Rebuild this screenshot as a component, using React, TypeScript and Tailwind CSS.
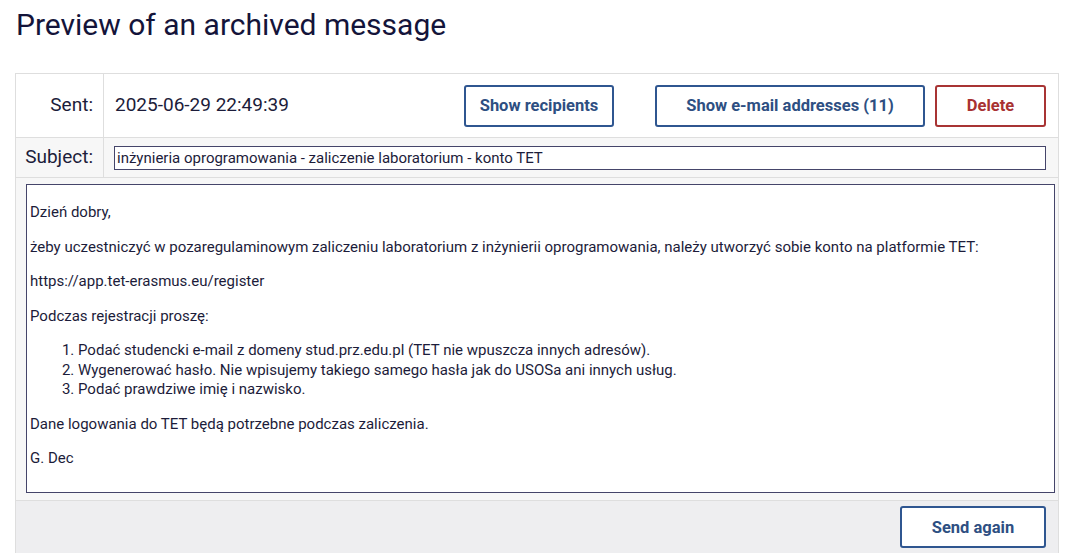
import React from 'react';

const BTN = 'h-[42px] rounded-[3px] border-2 bg-white pt-[2px] text-[16.5px] font-bold';
const BLUE = 'border-[#2f5690] text-[#2e4f82]';

export default function App() {
  return (
    <div className="min-h-screen bg-white font-['Roboto',sans-serif] text-[#1c1c3a]">
      <h1 className="pl-4 pt-[7px] text-[30px] leading-[36px] text-[#14143a]">Preview of an archived message</h1>

      <div className="ml-[15px] mr-[6px] mt-[30px] border-x border-t border-[#dedede]">
        {/* sent row */}
        <div className="flex h-[64px] border-b border-[#dedede]">
          <div className="flex w-[88px] items-center justify-end border-r border-[#dedede] pr-[10px] text-[19px]">Sent:</div>
          <div className="flex flex-1 items-center pl-[11px] text-[19px]">
            <span className="flex-1">2025-06-29 22:49:39</span>
            <button className={`${BTN} ${BLUE} w-[150px]`}>Show recipients</button>
            <button className={`${BTN} ${BLUE} ml-[41px] w-[270px]`}>Show e-mail addresses (11)</button>
            <button className={`${BTN} ml-[10px] mr-[12px] w-[111px] border-[#a83434] text-[#a83232]`}>Delete</button>
          </div>
        </div>

        {/* subject row */}
        <div className="flex h-[40px] border-b border-[#dedede] bg-[#f7f7f7]">
          <div className="flex w-[88px] items-center justify-end border-r border-[#dedede] pr-[10px] text-[19px]">Subject:</div>
          <div className="flex flex-1 items-center pl-[10px] pr-[12px]">
            <div className="h-[24px] w-full border border-[#45456a] bg-white pl-[2px] text-[15px] leading-[22px]">
              inżynieria oprogramowania - zaliczenie laboratorium - konto TET
            </div>
          </div>
        </div>

        {/* body */}
        <div className="border-b border-[#dedede] bg-[#f7f7f7] px-[10px] pt-[6px] pb-[7px] pr-[3px]">
          <div className="h-[309px] border border-[#45456a] bg-white px-[3px] pt-[3px] text-[15px] leading-[19.5px] [&_p]:my-[15px]">
            <p>Dzień dobry,</p>
            <p>żeby uczestniczyć w pozaregulaminowym zaliczeniu laboratorium z inżynierii oprogramowania, należy utworzyć sobie konto na platformie TET:</p>
            <p>https://app.tet-erasmus.eu/register</p>
            <p>Podczas rejestracji proszę:</p>
            <ol className="my-[15px] list-decimal pl-[48px]">
              <li>Podać studencki e-mail z domeny stud.prz.edu.pl (TET nie wpuszcza innych adresów).</li>
              <li>Wygenerować hasło. Nie wpisujemy takiego samego hasła jak do USOSa ani innych usług.</li>
              <li>Podać prawdziwe imię i nazwisko.</li>
            </ol>
            <p>Dane logowania do TET będą potrzebne podczas zaliczenia.</p>
            <p>G. Dec</p>
          </div>
        </div>

        {/* footer */}
        <div className="flex h-[60px] justify-end bg-[#eeeef0] pt-[5px] pr-[12px]">
          <button className={`${BTN} ${BLUE} w-[146px]`}>Send again</button>
        </div>
      </div>
    </div>
  );
}
